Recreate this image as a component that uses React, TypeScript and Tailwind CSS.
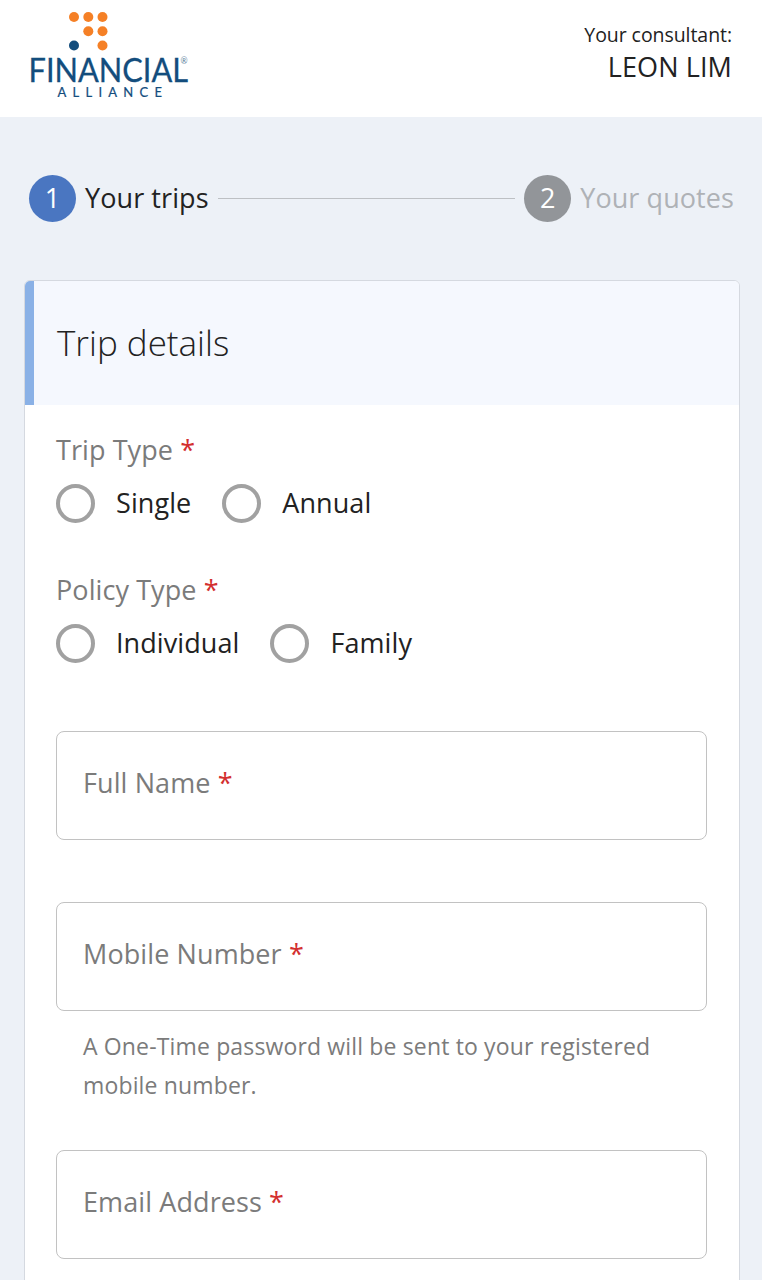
import { useState } from "react";

interface RadioOption {
    value: string;
    label: string;
}

interface RadioFieldProps {
    name: string;
    label: string;
    options: RadioOption[];
}

interface TextFieldProps {
    label: string;
    helperText?: string;
    className?: string;
}

const TRIP_TYPES: RadioOption[] = [
    { value: "single", label: "Single" },
    { value: "annual", label: "Annual" },
];

const POLICY_TYPES: RadioOption[] = [
    { value: "individual", label: "Individual" },
    { value: "family", label: "Family" },
];

function Logo() {
    return (
        <svg width="170" height="100" viewBox="0 0 170 100" className="shrink-0 overflow-visible" role="img" aria-label="Financial Alliance">
            <g fill="#f58026">
                <circle cx="48" cy="11" r="5" />
                <circle cx="62.3" cy="11" r="5" />
                <circle cx="76.5" cy="11" r="5" />
                <circle cx="62.3" cy="25.2" r="5" />
                <circle cx="76.5" cy="25.2" r="5" />
                <circle cx="76.5" cy="39.5" r="5" />
            </g>
            <circle cx="48" cy="39.5" r="5" fill="#134d7d" />
            <text x="2.5" y="75.5" textLength="159.5" lengthAdjust="spacingAndGlyphs" fontSize="33.5" stroke="#134d7d" strokeWidth="0.3" fill="#134d7d" className="font-[Lato,sans-serif]">
                FINANCIAL
            </text>
            <text x="154.5" y="58" fontSize="8.5" fill="#5d7f9e" className="font-[Lato,sans-serif]">
                ®
            </text>
            <text x="31.5" y="91" textLength="104.5" fontSize="13" stroke="#134d7d" strokeWidth="0.2" fill="#134d7d" className="font-[Lato,sans-serif]">
                ALLIANCE
            </text>
        </svg>
    );
}

function RequiredMark() {
    return <span className="text-[#d32f2f]"> *</span>;
}

function RadioField({ name, label, options }: RadioFieldProps) {
    const [selected, setSelected] = useState("");

    return (
        <fieldset className="h-[140px]">
            <legend className="text-[27px] leading-[40px] tracking-[0.08px] text-[#7b7b7b]">
                {label}
                <RequiredMark />
            </legend>
            <div className="flex h-[67px] items-center gap-[31px]">
                {options.map((option) => (
                    <label key={option.value} className="flex cursor-pointer items-center gap-[21px]">
                        <input
                            type="radio"
                            name={name}
                            value={option.value}
                            checked={selected === option.value}
                            onChange={() => setSelected(option.value)}
                            className="size-[39px] appearance-none rounded-full border-4 border-[#a1a1a1] checked:border-[12px] checked:border-[#4a76c1]"
                        />
                        <span className="pb-[2px] text-[27px] leading-[38px] tracking-[0.08px] text-[#222]">{option.label}</span>
                    </label>
                ))}
            </div>
        </fieldset>
    );
}

function TextField({ label, helperText, className }: TextFieldProps) {
    const [value, setValue] = useState("");

    return (
        <div className={className}>
            <label className="grid h-[109px] items-center rounded-lg border-[1.5px] border-[#c2c2c2] px-[26px]">
                {!value && (
                    <span className="pointer-events-none col-start-1 row-start-1 -mt-[5px] text-[27px] leading-[40px] tracking-[0.1px] text-[#7b7b7b]">
                        {label}
                        <RequiredMark />
                    </span>
                )}
                <input
                    value={value}
                    onChange={(e) => setValue(e.target.value)}
                    aria-label={label}
                    className="col-start-1 row-start-1 bg-transparent text-[27px] text-[#222] outline-none"
                />
            </label>
            {helperText && (
                <p className="px-[27px] pt-4 text-[23px] leading-[39px] tracking-[0.15px] text-[#7b7b7b]">{helperText}</p>
            )}
        </div>
    );
}

function Stepper() {
    return (
        <ol className="flex h-[163px] items-center pr-7 pl-[29px] text-[27px] leading-[40px]">
            <li className="flex items-center gap-[9px] text-[#222]">
                <span className="flex size-[47px] items-center justify-center rounded-full bg-[#4a76c1] pb-[2px] text-white">1</span>
                <span className="pb-[2px] tracking-[0.08px]">Your trips</span>
            </li>
            <li aria-hidden="true" className="mx-[9px] h-px flex-1 bg-[#bdc0c4]" />
            <li className="flex items-center gap-[9px] text-[#afb2b6]">
                <span className="flex size-[47px] items-center justify-center rounded-full bg-[#929599] pb-[2px] text-white">2</span>
                <span className="pb-[2px] tracking-[0.08px]">Your quotes</span>
            </li>
        </ol>
    );
}

export default function App() {
    return (
        <div className="h-[1280px] overflow-hidden bg-[#edf1f7] font-['Open_Sans',sans-serif]">
            <header className="flex h-[117px] justify-between bg-white pt-[6px] pr-[30px] pl-[26px]">
                <Logo />
                <div className="pt-[15px] text-right text-[#222]">
                    <p className="text-[19.5px] leading-[28px] tracking-[-0.06px]">Your consultant:</p>
                    <p className="text-[27px] leading-[36px] tracking-[0.1px]">LEON LIM</p>
                </div>
            </header>

            <Stepper />

            <main className="mr-[22px] ml-6 h-[1040px] overflow-hidden rounded-t-md border border-[#d5d9e0] bg-white">
                <div className="flex h-[124px] items-center border-l-[9px] border-[#8ab1e6] bg-[#f5f8fe] pl-[23px]">
                    <h1 className="text-[35px] font-light text-[#222]">Trip details</h1>
                </div>

                <form className="pt-[25px] pr-8 pl-[31px]">
                    <RadioField name="tripType" label="Trip Type" options={TRIP_TYPES} />
                    <RadioField name="policyType" label="Policy Type" options={POLICY_TYPES} />
                    <TextField label="Full Name" className="mt-[21px]" />
                    <TextField
                        label="Mobile Number"
                        helperText="A One-Time password will be sent to your registered mobile number."
                        className="mt-[62px]"
                    />
                    <TextField label="Email Address" className="mt-[45px]" />
                </form>
            </main>
        </div>
    );
}
